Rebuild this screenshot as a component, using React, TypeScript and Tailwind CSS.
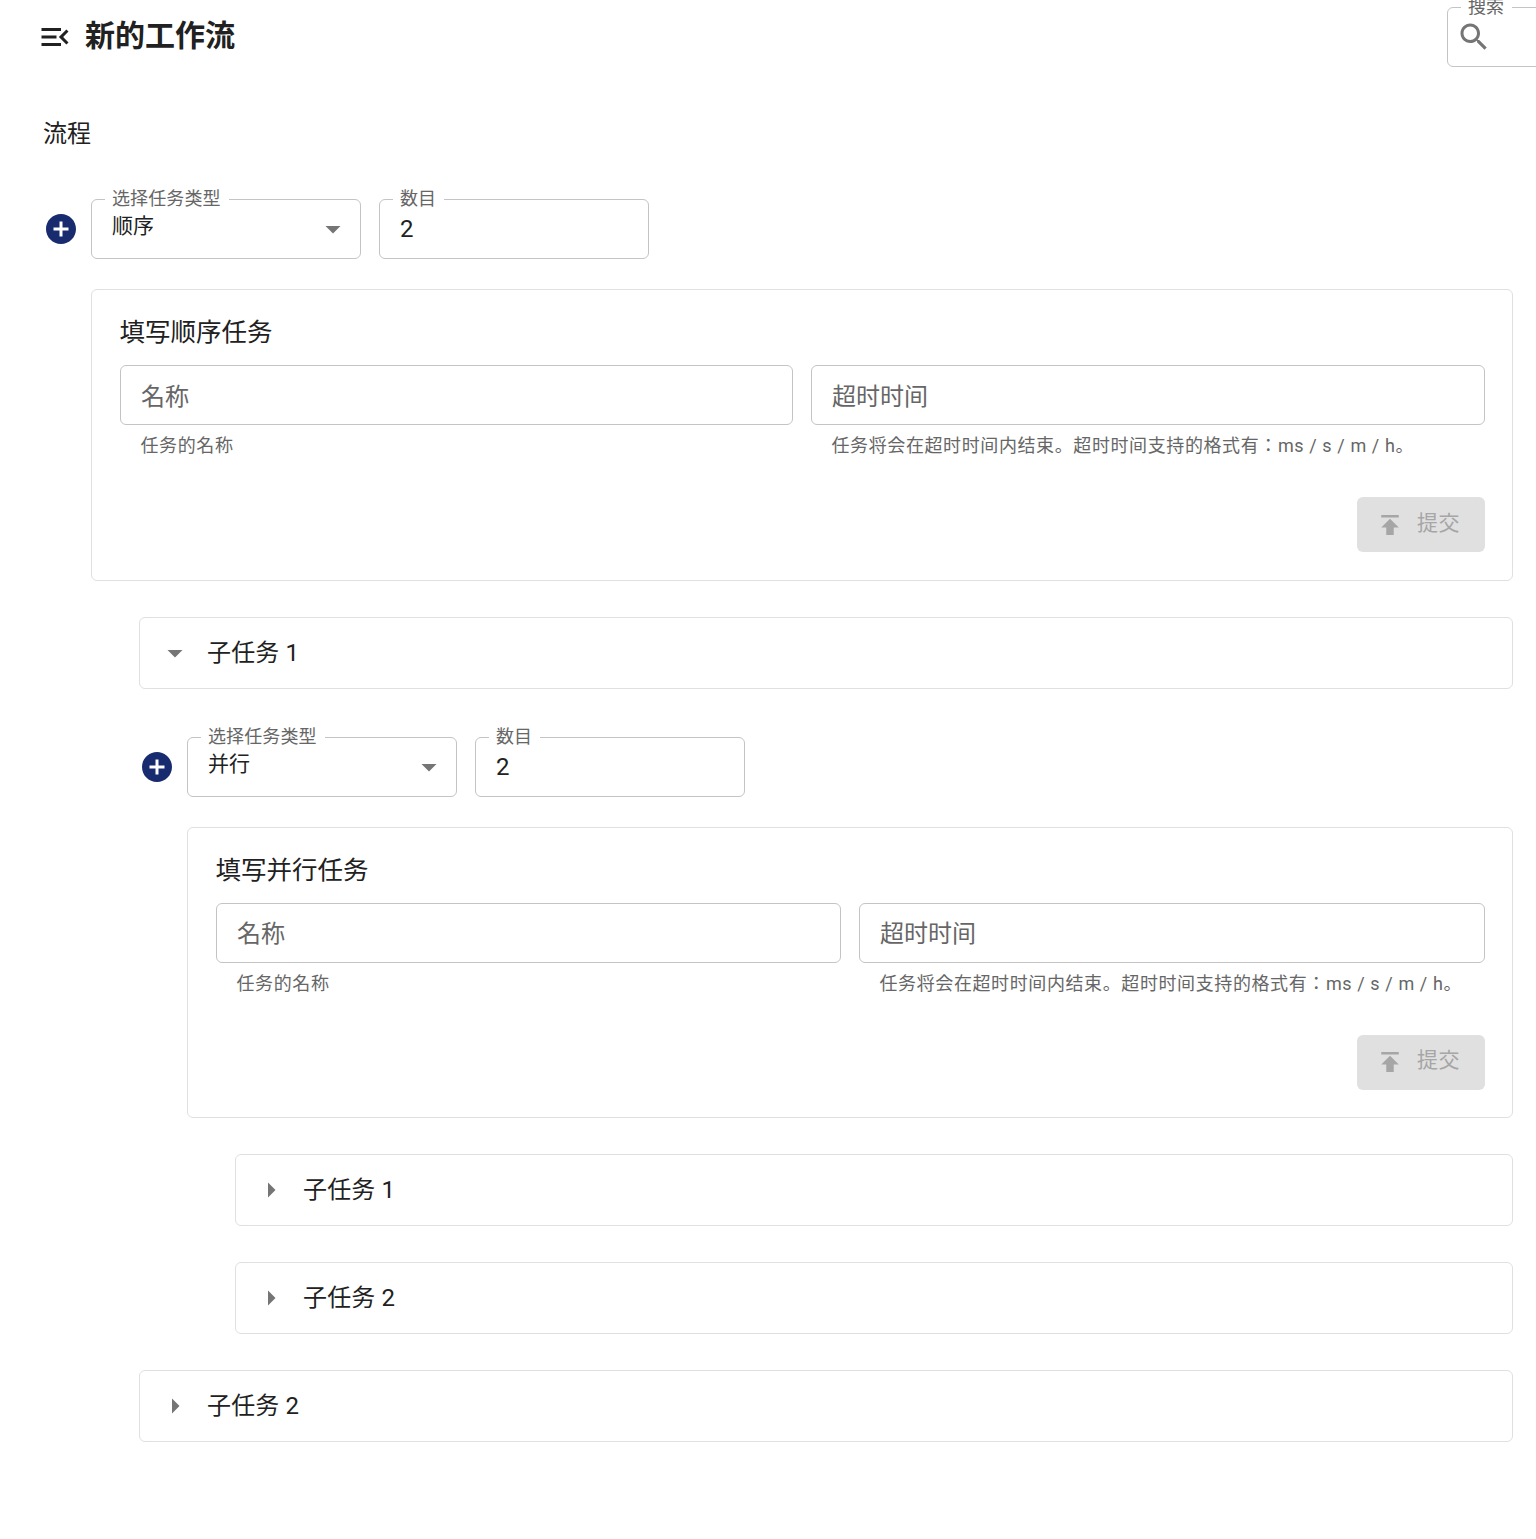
const Icon = ({ d, className }: { d: string; className: string }) => (
  <svg viewBox="0 0 24 24" className={className} fill="currentColor" aria-hidden="true">
    <path d={d} />
  </svg>
);

const P = {
  menu: "M3 18h13v-2H3v2zm0-5h10v-2H3v2zm0-7v2h13V6H3zm18 9.59L17.42 12 21 8.41 19.59 7l-5 5 5 5L21 15.59z",
  search:
    "M15.5 14h-.79l-.28-.27C15.41 12.59 16 11.11 16 9.5 16 5.91 13.09 3 9.5 3S3 5.91 3 9.5 5.91 16 9.5 16c1.61 0 3.09-.59 4.23-1.57l.27.28v.79l5 4.99L20.49 19l-4.99-5zm-6 0C7.01 14 5 11.99 5 9.5S7.01 5 9.5 5 14 7.01 14 9.5 11.99 14 9.5 14z",
  add: "M12 2C6.48 2 2 6.48 2 12s4.48 10 10 10 10-4.48 10-10S17.52 2 12 2zm5 11h-4v4h-2v-4H7v-2h4V7h2v4h4v2z",
  down: "M7 10l5 5 5-5z",
  right: "M10 17l5-5-5-5v10z",
  publish: "M5 4v2h14V4H5zm0 10h4v6h6v-6h4l-7-7-7 7z",
};

const Legend = ({ children }: { children: string }) => (
  <span className="absolute left-[13px] top-[-13px] bg-white pl-[7px] pr-[8px] text-[18px] leading-[24px] tracking-[0.1px] text-[#666666] whitespace-nowrap">
    {children}
  </span>
);

const Outlined = ({ label, children, className }: { label: string; children: any; className: string }) => (
  <div className={`relative h-[60px] rounded-[6px] border border-[#c4c4c4] ${className}`}>
    <Legend>{label}</Legend>
    {children}
  </div>
);

const PlainInput = ({ text, helper }: { text: string; helper: string }) => (
  <div className="min-w-0">
    <div className="flex h-[60px] items-center rounded-[6px] border border-[#c4c4c4] pl-[20px] pt-[3px] text-[24px] text-[#666666]">
      {text}
    </div>
    <div className="mt-[9px] pl-[20.5px] text-[18px] leading-[24px] tracking-[0.6px] text-[#666666] whitespace-nowrap">
      {helper}
    </div>
  </div>
);

const FormCard = ({ title }: { title: string }) => (
  <div className="rounded-[6px] border border-[#e0e0e0] pb-[27.5px] pl-[28px] pr-[27px] pt-[24px]">
    <div className="-ml-[0.5px] text-[25.5px] leading-[36px] text-[#212121]">{title}</div>
    <div className="mt-[15px] grid grid-cols-[minmax(0,calc(50%-9.5px))_minmax(0,1fr)] gap-x-[18px]">
      <PlainInput text="名称" helper="任务的名称" />
      <PlainInput text="超时时间" helper="任务将会在超时时间内结束。超时时间支持的格式有：ms / s / m / h。" />
    </div>
    <div className="mt-[39px] flex justify-end">
      <div className="flex h-[55px] w-[128px] items-center rounded-[6px] bg-[#e0e0e0] pl-[18px] text-[21px] tracking-[0.6px] text-[#a6a6a6]">
        <Icon d={P.publish} className="h-[30px] w-[30px] shrink-0" />
        <span className="ml-[12px] -translate-y-[1px]">提交</span>
      </div>
    </div>
  </div>
);

const Accordion = ({ text, open }: { text: string; open?: boolean }) => (
  <div className="flex h-[72px] items-center rounded-[6px] border border-[#e0e0e0] pl-[17px] text-[24px] tracking-[0.15px] text-[#212121]">
    <Icon d={open ? P.down : P.right} className="h-[36px] w-[36px] shrink-0 text-[#757575]" />
    <span className="ml-[14px]">{text}</span>
  </div>
);

const Level = ({ kind, title, children }: { kind: string; title: string; children: any }) => (
  <div>
    <div className="flex items-center">
      <Icon d={P.add} className="h-[36px] w-[36px] shrink-0 text-[#172b6e]" />
      <Outlined label="选择任务类型" className="ml-[12px] w-[270px]">
        <div className="flex h-full items-center justify-between pl-[20px] pr-[9px]">
          <span className="-translate-y-[2px] text-[21px] text-[#212121]">{kind}</span>
          <Icon d={P.down} className="h-[36px] w-[36px] text-[#757575]" />
        </div>
      </Outlined>
      <Outlined label="数目" className="ml-[18px] w-[270px]">
        <div className="flex h-full items-center pl-[20px] text-[24px] text-[#212121]">2</div>
      </Outlined>
    </div>
    <div className="ml-[48px] mt-[30px]">
      <FormCard title={title} />
      {children}
    </div>
  </div>
);

export default function App() {
  return (
    <div className="h-[1539px] overflow-hidden bg-white font-['Roboto','Noto_Sans_CJK_JP',sans-serif]">
      <header className="flex h-[74px] items-center pl-[36.5px]">
        <Icon d={P.menu} className="h-[36px] w-[36px] shrink-0 text-[#212121]" />
        <h1 className="ml-[12.5px] -translate-y-[1px] text-[30px] font-bold leading-[40px] text-[#212121]">新的工作流</h1>
        <div className="ml-auto mr-[-60px] w-[149px]">
          <Outlined label="搜索" className="rounded-[6px]">
            <div className="flex h-full items-center pl-[7.5px]">
              <Icon d={P.search} className="h-[36px] w-[36px] text-[#757575]" />
            </div>
          </Outlined>
        </div>
      </header>
      <main className="pl-[43px] pr-[23px]">
        <div className="mt-[42px] mb-[47px] text-[24px] leading-[36px] text-[#212121]">流程</div>
        <Level kind="顺序" title="填写顺序任务">
          <div className="ml-[48px]">
            <div className="mt-[36px]">
              <Accordion text="子任务 1" open />
            </div>
            <div className="mt-[48px]">
              <Level kind="并行" title="填写并行任务">
                <div className="ml-[48px]">
                  <div className="mt-[36px]">
                    <Accordion text="子任务 1" />
                  </div>
                  <div className="mt-[36px]">
                    <Accordion text="子任务 2" />
                  </div>
                </div>
              </Level>
            </div>
            <div className="mt-[36px]">
              <Accordion text="子任务 2" />
            </div>
          </div>
        </Level>
      </main>
    </div>
  );
}
